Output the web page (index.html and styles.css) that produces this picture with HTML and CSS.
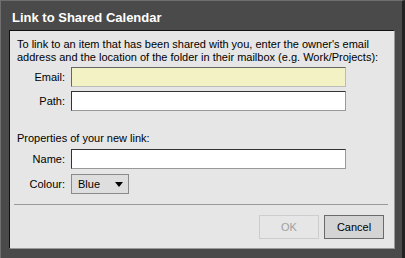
FILE: index.html
```html
<!DOCTYPE html>
<html>
<head>
<meta charset="utf-8">
<link rel="stylesheet" href="styles.css">
</head>
<body>
<div class="dialog">
  <div class="titlebar">Link to Shared Calendar</div>
  <div class="panel">
    <p class="intro">To link to an item that has been shared with you, enter the owner's email address and the location of the folder in their mailbox (e.g. Work/Projects):</p>
    <div class="form form-top">
      <label class="label">Email:</label>
      <div class="input input-email"></div>
      <label class="label">Path:</label>
      <div class="input"></div>
    </div>
    <p class="section">Properties of your new link:</p>
    <div class="form form-bottom">
      <label class="label">Name:</label>
      <div class="input"></div>
      <label class="label">Colour:</label>
      <div class="select"><span class="select-text">Blue</span><span class="select-arrow"></span></div>
    </div>
    <div class="separator"></div>
    <div class="buttons">
      <div class="btn btn-disabled">OK</div>
      <div class="btn btn-cancel">Cancel</div>
    </div>
  </div>
</div>
</body>
</html>
```
FILE: styles.css
```css
html, body {
  margin: 0;
  padding: 0;
  background: #4a4a4a;
}
.dialog {
  width: 405px;
  height: 258px;
  box-sizing: border-box;
  background: #4a4a4a;
  border-top: 1px solid #6e6e6e;
  border-left: 1px solid #6e6e6e;
  border-right: 3px solid #222;
  font-family: "Liberation Sans", Arial, sans-serif;
  font-size: 11px;
  color: #000;
}
.titlebar {
  height: 29px;
  box-sizing: border-box;
  padding: 9px 0 0 11px;
  color: #fff;
  font-weight: bold;
  font-size: 13px;
  line-height: 15px;
}
.panel {
  margin-left: 8px;
  width: 386px;
  height: 219px;
  box-sizing: border-box;
  background: #e6e6e6;
  border-style: solid;
  border-width: 1px;
  border-color: #111 #9a9a9a #9a9a9a #111;
  display: flex;
  flex-direction: column;
}
.intro {
  margin: 7px 8px 0 7px;
  line-height: 13px;
}
.form {
  display: grid;
  grid-template-columns: 55px 275px;
  column-gap: 6px;
  align-items: center;
}
.form-top {
  margin-top: 3px;
  row-gap: 4px;
}
.form-bottom {
  margin-top: 4px;
  row-gap: 5px;
}
.label {
  text-align: right;
  line-height: 13px;
}
.input {
  height: 20px;
  box-sizing: border-box;
  background: #fff;
  border-style: solid;
  border-width: 1px;
  border-color: #333 #999 #999 #333;
}
.input-email {
  height: 20px;
  background: #f3f2c5;
  border-color: #666 #bbb #bbb #666;
}
.section {
  margin: 21px 0 0 7px;
  line-height: 13px;
}
.select {
  width: 58px;
  height: 20px;
  box-sizing: border-box;
  background: #dedede;
  border: 1px solid #8a8a8a;
  display: flex;
  align-items: center;
  padding-left: 6px;
}
.select-text {
  flex: 1;
}
.select-arrow {
  width: 0;
  height: 0;
  border-left: 4px solid transparent;
  border-right: 4px solid transparent;
  border-top: 5px solid #000;
  margin-right: 5px;
}
.separator {
  margin: 10px 6px 0 4px;
  height: 1px;
  background: #999;
}
.buttons {
  margin: 10px 10px 0 0;
  display: flex;
  justify-content: flex-end;
  gap: 5px;
}
.btn {
  width: 60px;
  height: 24px;
  box-sizing: border-box;
  display: flex;
  align-items: center;
  justify-content: center;
  font-size: 11px;
}
.btn-disabled {
  background: #e6e6e6;
  border: 1px solid #cdcdcd;
  color: #a0a0a0;
}
.btn-cancel {
  background: #d4d4d4;
  border: 1px solid #6a6a6a;
  color: #000;
}
```
